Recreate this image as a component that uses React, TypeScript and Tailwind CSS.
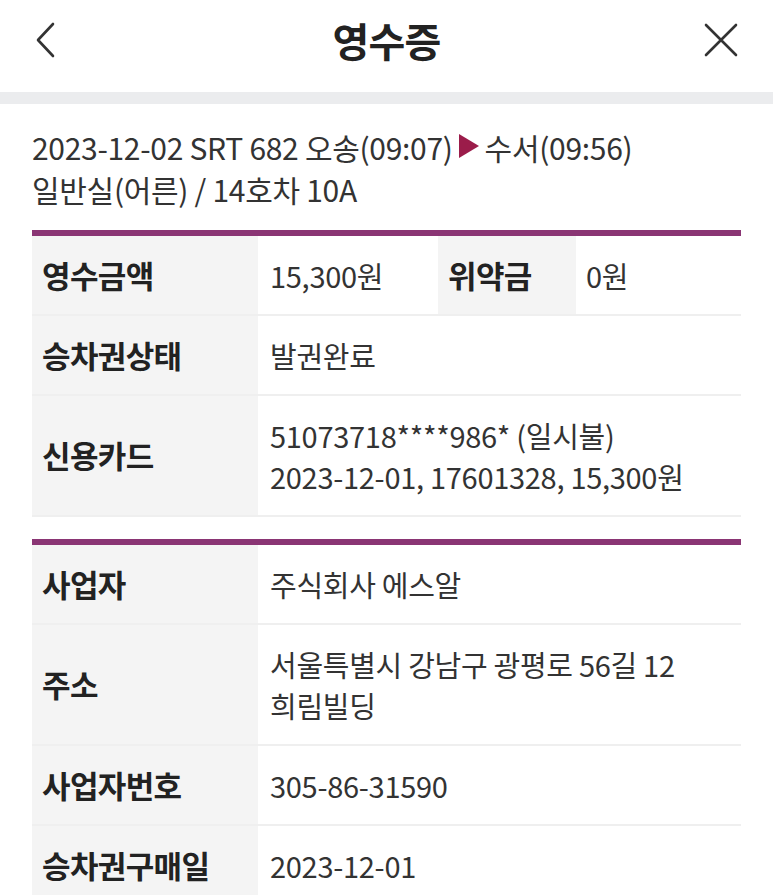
import React from 'react'

const font = { fontFamily: '"Noto Sans CJK KR", "Noto Sans", sans-serif' }

function Row({ label, children, extra }: { label: string; children: React.ReactNode; extra?: React.ReactNode }) {
  return (
    <div className="flex border-b-2 border-[#efefef]">
      <div className="w-[226px] shrink-0 bg-[#f4f4f4] pl-[10px] flex items-center text-[31px] font-bold text-[#222] tracking-[-0.02em]">
        {label}
      </div>
      <div className="flex-1 flex">
        <div className="flex-1 pl-3 py-[18.5px] text-[29px] leading-[41px] text-[#333] tracking-[-0.01em]">{children}</div>
        {extra}
      </div>
    </div>
  )
}

function Divider() {
  return <div className="h-[6px] bg-[#8a3574]" />
}

export default function App() {
  return (
    <div className="w-[773px] h-[895px] overflow-hidden bg-white" style={font}>
      <header className="h-[92px] flex items-center justify-between px-[34px] pb-[12px]">
        <svg width="24" height="36" viewBox="0 0 24 36" fill="none" stroke="#333" strokeWidth="2.6" strokeLinecap="round" strokeLinejoin="round">
          <path d="M19 2 L4 18 L19 34" />
        </svg>
        <h1 className="text-[40px] font-bold text-[#222] tracking-[-0.02em] ml-3">영수증</h1>
        <svg width="36" height="36" viewBox="0 0 36 36" fill="none" stroke="#333" strokeWidth="2.6" strokeLinecap="round">
          <path d="M3 3 L33 33 M33 3 L3 33" />
        </svg>
      </header>
      <div className="h-[12px] bg-[#ebecee]" />

      <div className="px-8 pt-[22px]">
        <div className="text-[30px] leading-[42px] text-[#333] tracking-[-0.01em]">
          <div className="flex items-center">
            <span>2023-12-02 SRT 682 오송(09:07)</span>
            <svg width="20" height="24" viewBox="0 0 20 24" className="ml-[6px] mr-[6px] -mt-[2px]">
              <path d="M0 0 L20 12 L0 24 Z" fill="#9b1c4a" />
            </svg>
            <span>수서(09:56)</span>
          </div>
          <div>일반실(어른) / 14호차 10A</div>
        </div>

        <div className="mt-[20px]">
          <Divider />
          <Row
            label="영수금액"
            extra={
              <>
                <div className="w-[138px] bg-[#f4f4f4] pl-[10px] flex items-center text-[31px] font-bold text-[#222] tracking-[-0.02em]">
                  위약금
                </div>
                <div className="w-[165px] pl-[10px] py-[18.5px] text-[29px] leading-[41px] text-[#333] tracking-[-0.01em]">0원</div>
              </>
            }
          >
            15,300원
          </Row>
          <Row label="승차권상태">발권완료</Row>
          <Row label="신용카드">
            <div>51073718****986* (일시불)</div>
            <div>2023-12-01, 17601328, 15,300원</div>
          </Row>
        </div>

        <div className="mt-[22px]">
          <Divider />
          <Row label="사업자">주식회사 에스알</Row>
          <Row label="주소">
            <div>서울특별시 강남구 광평로 56길 12</div>
            <div>희림빌딩</div>
          </Row>
          <Row label="사업자번호">305-86-31590</Row>
          <Row label="승차권구매일">2023-12-01</Row>
        </div>
      </div>
    </div>
  )
}
